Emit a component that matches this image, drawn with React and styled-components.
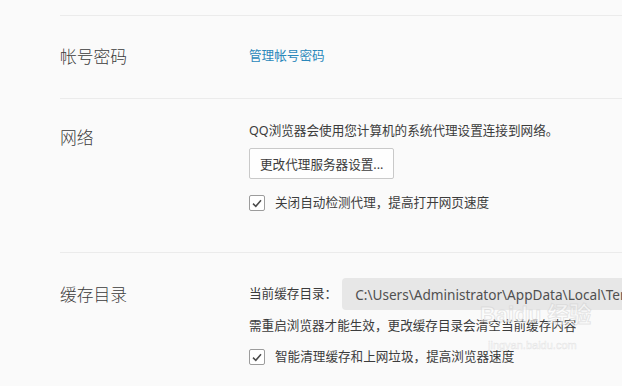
import React from "react";
import styled, { createGlobalStyle } from "styled-components";

const Global = createGlobalStyle`
  html, body { margin: 0; padding: 0; background: #fafafa; overflow: hidden; }
  body { font-family: "Noto Sans", "Noto Sans CJK SC", sans-serif; }
`;

const Page = styled.div`
  position: relative;
  width: 622px;
  height: 386px;
  padding: 15px 0 0 60px;
  box-sizing: border-box;
  overflow: hidden;
  background: #fafafa;
`;

const Section = styled.section`
  display: grid;
  grid-template-columns: 189px 1fr;
  border-top: 1px solid #ebebeb;
  align-items: ${(p) => (p.$center ? "center" : "start")};
  min-height: ${(p) => p.$height || 0}px;
  padding: ${(p) => p.$pad || "0"};
  box-sizing: border-box;
`;

const Label = styled.div`
  font-size: 16.8px;
  line-height: 24px;
  font-weight: 300;
  color: #3a3a3a;
  margin-top: ${(p) => p.$top || 0}px;
`;

const Content = styled.div`
  display: flex;
  flex-direction: column;
  align-items: flex-start;
  min-width: 0;
`;

const Link = styled.a`
  font-size: 12.6px;
  line-height: 18px;
  color: #2a88ba;
  text-decoration: none;
  margin-top: -2px;
`;

const Text = styled.div`
  font-size: 12.6px;
  line-height: 18px;
  color: #3c3c3c;
  white-space: nowrap;
  margin-top: ${(p) => p.$top || 0}px;
`;

const Button = styled.button`
  margin-top: 8px;
  height: 31px;
  padding: 0 10px;
  border: 1px solid #c9c9c9;
  border-radius: 2px;
  background: #fefefe;
  font-family: inherit;
  font-size: 12.6px;
  color: #3c3c3c;
  box-sizing: border-box;
`;

const CheckRow = styled.label`
  display: flex;
  align-items: center;
  gap: 10px;
  font-size: 12.6px;
  line-height: 18px;
  color: #3c3c3c;
  white-space: nowrap;
  margin-top: ${(p) => p.$top || 0}px;
`;

const Box = styled.span`
  width: 16px;
  height: 16px;
  box-sizing: border-box;
  border: 1px solid #9c9c9c;
  border-radius: 2px;
  background: #fff;
  display: flex;
  align-items: center;
  justify-content: center;
`;

const PathRow = styled.div`
  display: flex;
  align-items: center;
  width: 400px;
`;

const PathField = styled.div`
  margin-left: 5px;
  height: 32px;
  flex: 1;
  border-radius: 4px;
  background: #e7e7e7;
  display: flex;
  align-items: center;
  padding-left: 13px;
  font-size: 13.6px;
  color: #505050;
  white-space: nowrap;
  overflow: hidden;
`;

const Watermark = styled.div`
  position: absolute;
  left: 480px;
  top: 300px;
  pointer-events: none;
  display: flex;
  flex-direction: column;
  align-items: flex-start;
  white-space: nowrap;
  color: rgba(255, 255, 255, 0.5);
  -webkit-text-stroke: 1px rgba(195, 195, 195, 0.4);
  font-family: "Liberation Sans", "Noto Sans CJK SC", sans-serif;
`;

const WmBig = styled.div`
  font-size: 22px;
  font-weight: bold;
  line-height: 30px;
`;

const WmSmall = styled.div`
  font-size: 11px;
  line-height: 14px;
  margin: 8px 0 0 8px;
  -webkit-text-stroke: 0.5px rgba(195, 195, 195, 0.4);
`;

const Check = () => (
  <Box>
    <svg width="10" height="9" viewBox="0 0 10 9">
      <path d="M1 4.6 L3.8 7.3 L9 1.3" fill="none" stroke="#4a4a4a" strokeWidth="1.5" />
    </svg>
  </Box>
);

export default function App() {
  return (
    <>
      <Global />
      <Page>
        <Section $center $height={83}>
          <Label>帐号密码</Label>
          <Content>
            <Link href="#">管理帐号密码</Link>
          </Content>
        </Section>
        <Section $pad="23px 0 40px 0">
          <Label $top={4}>网络</Label>
          <Content>
            <Text>QQ浏览器会使用您计算机的系统代理设置连接到网络。</Text>
            <Button>更改代理服务器设置...</Button>
            <CheckRow $top={15}>
              <Check />
              关闭自动检测代理，提高打开网页速度
            </CheckRow>
          </Content>
        </Section>
        <Section $pad="25px 0 0 0">
          <Label $top={5}>缓存目录</Label>
          <Content>
            <PathRow>
              <Text>当前缓存目录：</Text>
              <PathField>C:\Users\Administrator\AppData\Local\Tencent\QQBrowser\User Data\Default\Cache</PathField>
            </PathRow>
            <Text $top={7}>需重启浏览器才能生效，更改缓存目录会清空当前缓存内容</Text>
            <CheckRow $top={13}>
              <Check />
              智能清理缓存和上网垃圾，提高浏览器速度
            </CheckRow>
          </Content>
        </Section>
        <Watermark>
          <WmBig>Baidu 经验</WmBig>
          <WmSmall>jingyan.baidu.com</WmSmall>
        </Watermark>
      </Page>
    </>
  );
}
